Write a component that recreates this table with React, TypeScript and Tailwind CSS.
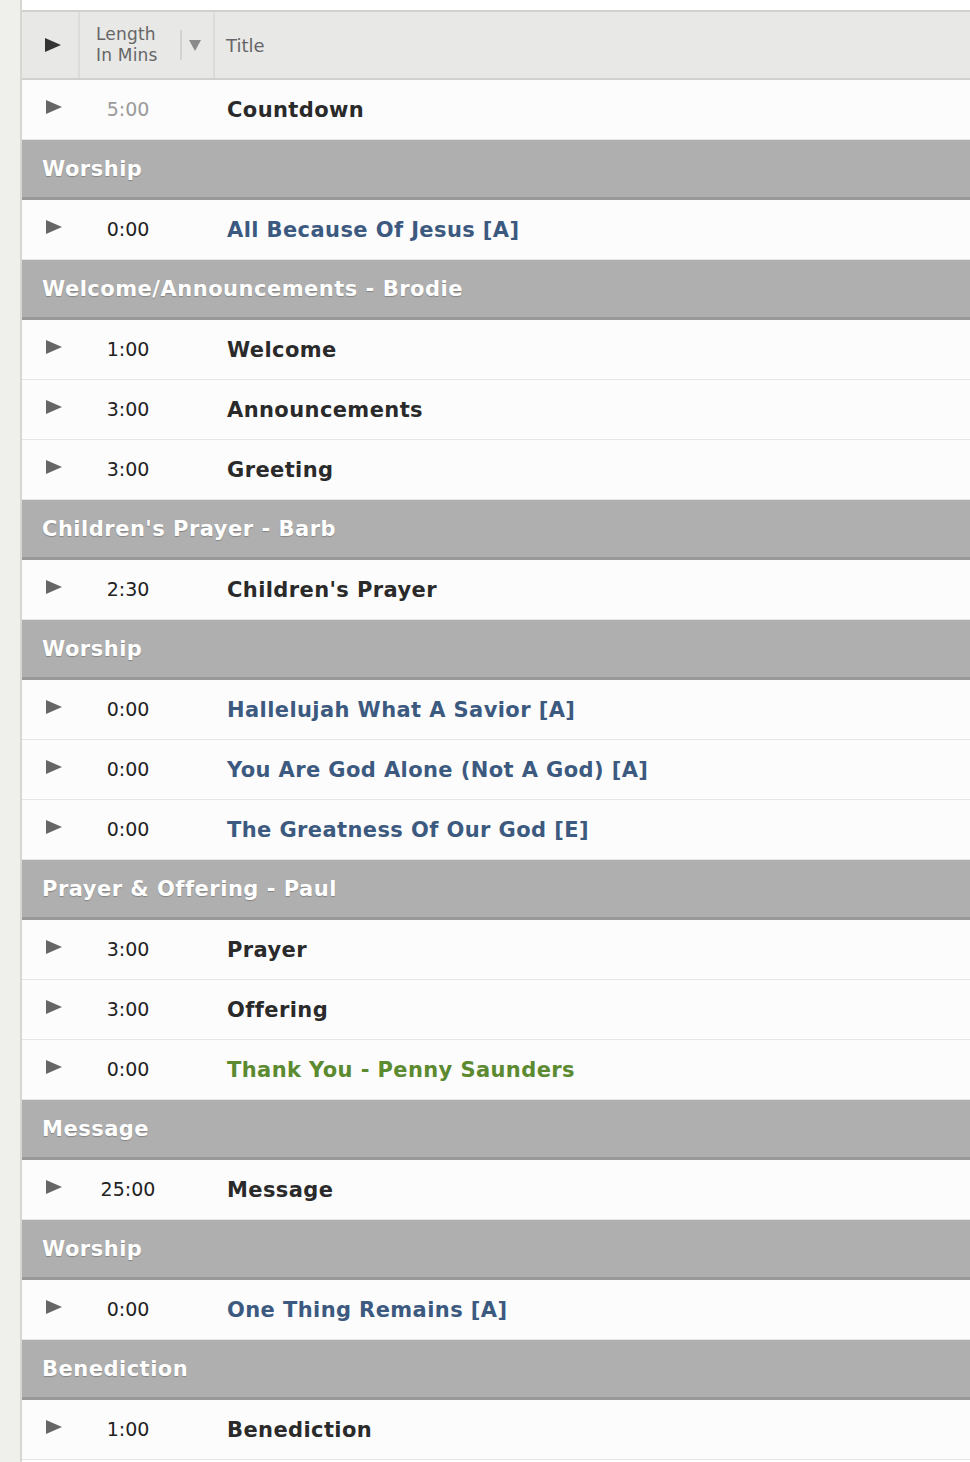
type Item =
  | { kind: "section"; title: string }
  | { kind: "row"; time: string; title: string; tone?: "song" | "green" | "muted" };

const items: Item[] = [
  { kind: "row", time: "5:00", title: "Countdown", tone: "muted" },
  { kind: "section", title: "Worship" },
  { kind: "row", time: "0:00", title: "All Because Of Jesus [A]", tone: "song" },
  { kind: "section", title: "Welcome/Announcements - Brodie" },
  { kind: "row", time: "1:00", title: "Welcome" },
  { kind: "row", time: "3:00", title: "Announcements" },
  { kind: "row", time: "3:00", title: "Greeting" },
  { kind: "section", title: "Children's Prayer - Barb" },
  { kind: "row", time: "2:30", title: "Children's Prayer" },
  { kind: "section", title: "Worship" },
  { kind: "row", time: "0:00", title: "Hallelujah What A Savior [A]", tone: "song" },
  { kind: "row", time: "0:00", title: "You Are God Alone (Not A God) [A]", tone: "song" },
  { kind: "row", time: "0:00", title: "The Greatness Of Our God [E]", tone: "song" },
  { kind: "section", title: "Prayer & Offering - Paul" },
  { kind: "row", time: "3:00", title: "Prayer" },
  { kind: "row", time: "3:00", title: "Offering" },
  { kind: "row", time: "0:00", title: "Thank You - Penny Saunders", tone: "green" },
  { kind: "section", title: "Message" },
  { kind: "row", time: "25:00", title: "Message" },
  { kind: "section", title: "Worship" },
  { kind: "row", time: "0:00", title: "One Thing Remains [A]", tone: "song" },
  { kind: "section", title: "Benediction" },
  { kind: "row", time: "1:00", title: "Benediction" },
];

function Play({ className }: { className: string }) {
  return (
    <svg width="16" height="14" viewBox="0 0 16 14" className={className}>
      <path d="M0 0 L16 7 L0 14 Z" fill="currentColor" />
    </svg>
  );
}

export default function App() {
  return (
    <div className="flex min-h-[1462px] bg-white font-['DejaVu_Sans',sans-serif]">
      {/* left gutter */}
      <div className="w-[22px] shrink-0 bg-[#efefeb] border-r-2 border-[#d6d6d2]" />
      <div className="flex-1 min-w-0">
        <div className="h-[10px] bg-white" />
        {/* column header */}
        <div className="flex h-[70px] bg-[#e8e8e6] border-y-2 border-[#d0d0d0]">
          <div className="w-[58px] shrink-0 flex items-center justify-center border-r-2 border-[#dcdcda] text-[#333]">
            <Play className="ml-[6px]" />
          </div>
          <div className="w-[135px] shrink-0 flex items-center border-r-2 border-[#dcdcda]">
            <div className="pl-[16px] text-[17px] leading-[21px] text-[#666] tracking-[0.2px]">
              <div>Length</div>
              <div>In Mins</div>
            </div>
            <div className="ml-[22px] h-[30px] border-l-2 border-[#d2d2d0]" />
            <svg width="12" height="11" viewBox="0 0 12 11" className="ml-[7px] text-[#8a8a8a]">
              <path d="M0 0 L12 0 L6 11 Z" fill="currentColor" />
            </svg>
          </div>
          <div className="flex items-center pl-[11px] text-[18px] text-[#666]">Title</div>
        </div>
        {items.map((it, i) =>
          it.kind === "section" ? (
            <div
              key={i}
              className="h-[60px] flex items-center pl-[20px] pt-[3px] bg-[#afafaf] border-b-[3px] border-[#999] text-white font-bold text-[21px] tracking-[0.5px] [text-shadow:0_1px_1px_rgba(0,0,0,0.25)]"
            >
              {it.title}
            </div>
          ) : (
            <div key={i} className="flex h-[60px] bg-[#fcfcfc] border-b border-[#e6e6e6]">
              <div className="w-[58px] shrink-0 flex items-center justify-center pb-[6px] text-[#666]">
                <Play className="ml-[6px]" />
              </div>
              <div
                className={`w-[96px] shrink-0 flex items-center justify-center text-[19px] ${
                  it.tone === "muted" ? "text-[#9a9a9a]" : "text-[#222]"
                }`}
              >
                {it.time}
              </div>
              <div
                className={`flex items-center pl-[51px] pt-[2px] font-bold text-[21px] tracking-[0.4px] ${
                  it.tone === "song"
                    ? "text-[#3c5a80]"
                    : it.tone === "green"
                    ? "text-[#5b8a30]"
                    : "text-[#2a2a2a]"
                }`}
              >
                {it.title}
              </div>
            </div>
          )
        )}
      </div>
    </div>
  );
}
